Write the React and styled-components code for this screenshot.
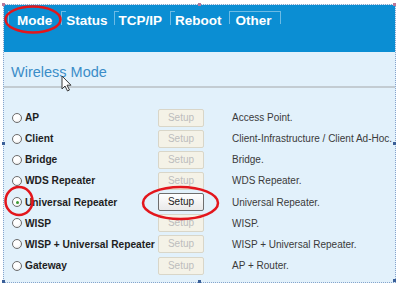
import React from 'react';
import styled, { createGlobalStyle } from 'styled-components';

const GlobalStyle = createGlobalStyle`
  html, body {
    margin: 0;
    padding: 0;
    background: #ffffff;
  }
  body {
    font-family: "Liberation Sans", Arial, sans-serif;
  }
`;

const Page = styled.div`
  position: relative;
  width: 400px;
  height: 287px;
  padding: 4px 0 0 3px;
  box-sizing: border-box;
  overflow: hidden;
`;

const Frame = styled.div`
  width: 393px;
  height: 279px;
  box-sizing: border-box;
  border: 1px dotted #86a4cc;
  display: flex;
  flex-direction: column;
  background: #e2f1fb;
`;

const Header = styled.div`
  height: 47px;
  flex: none;
  box-sizing: border-box;
  padding: 6px 0 0 4px;
  background: #0b8ed3;
  display: flex;
  align-items: flex-start;
`;

const Tab = styled.div`
  position: relative;
  height: ${({ $last }) => ($last ? 11 : 12)}px;
  padding: ${({ $last }) => ($last ? 1 : 2)}px ${({ $pr }) => $pr}px 0 ${({ $pl }) => $pl}px;
  border-left: 1px solid #6cbbe5;
  border-right: ${({ $last }) => ($last ? '1px solid #6cbbe5' : 'none')};
  border-top: ${({ $last }) => ($last ? '1px solid #6cbbe5' : 'none')};
  color: #ffffff;
  font: bold 13.5px "Liberation Sans", Arial, sans-serif;
  line-height: 16px;
  white-space: nowrap;

  &::before {
    content: '';
    display: ${({ $last }) => ($last ? 'none' : 'block')};
    position: absolute;
    top: 0;
    left: 0;
    width: 4px;
    height: 1px;
    background: #6cbbe5;
  }
`;

const Panel = styled.div`
  flex: 1;
  padding-top: 11px;
`;

const Title = styled.div`
  padding: 0 0 5px 7px;
  border-bottom: 2px solid #c3ccd2;
  color: #3b8dc8;
  font: 14.5px "Liberation Sans", Arial, sans-serif;
  line-height: 18px;
`;

const List = styled.div`
  padding: 19px 0 0 8px;
`;

const Row = styled.div`
  display: grid;
  grid-template-columns: 146px 74px 1fr;
  align-items: center;
  height: 21.15px;
`;

const Option = styled.label`
  display: flex;
  align-items: center;
  color: #1e1e1e;
  font: bold 10.2px "Liberation Sans", Arial, sans-serif;
  white-space: nowrap;
`;

const Radio = styled.span`
  position: relative;
  width: 10px;
  height: 10px;
  margin-right: 3px;
  box-sizing: border-box;
  border: 1px solid #6c6c6c;
  border-radius: 50%;
  background: radial-gradient(circle at 40% 35%, #ffffff 40%, #e4e4e4 100%);

  &::after {
    content: '';
    display: ${({ $checked }) => ($checked ? 'block' : 'none')};
    position: absolute;
    left: 2.5px;
    top: 2.5px;
    width: 3px;
    height: 3px;
    border-radius: 50%;
    background: #3a9a34;
  }
`;

const SetupButton = styled.button`
  width: 46px;
  height: 18px;
  padding: 0;
  box-sizing: border-box;
  border: 1px solid ${({ disabled }) => (disabled ? '#d9d6c8' : '#6e6e6e')};
  border-radius: 2px;
  background: ${({ disabled }) =>
    disabled ? '#f4f2e7' : 'linear-gradient(#ffffff, #e9e9e9)'};
  color: ${({ disabled }) => (disabled ? '#bdbdbd' : '#1c1c1c')};
  font: 10px "Liberation Sans", Arial, sans-serif;
  line-height: 16px;
`;

const Description = styled.span`
  color: #3a3a3a;
  font: 10px "Liberation Sans", Arial, sans-serif;
  white-space: nowrap;
`;

const Overlay = styled.svg`
  position: absolute;
  top: 0;
  left: 0;
  pointer-events: none;
`;

const tabs = [
  { label: 'Mode', pl: 8, pr: 9 },
  { label: 'Status', pl: 4, pr: 6 },
  { label: 'TCP/IP', pl: 4, pr: 8 },
  { label: 'Reboot', pl: 4, pr: 7 },
  { label: 'Other', pl: 6, pr: 8, last: true },
];

const modes = [
  { name: 'AP', desc: 'Access Point.' },
  { name: 'Client', desc: 'Client-Infrastructure / Client Ad-Hoc.' },
  { name: 'Bridge', desc: 'Bridge.' },
  { name: 'WDS Repeater', desc: 'WDS Repeater.' },
  { name: 'Universal Repeater', desc: 'Universal Repeater.', active: true },
  { name: 'WISP', desc: 'WISP.' },
  { name: 'WISP + Universal Repeater', desc: 'WISP + Universal Repeater.' },
  { name: 'Gateway', desc: 'AP + Router.' },
];

const handles = [
  [2, 3], [198, 3], [393, 3],
  [2, 142], [393, 142],
  [2, 280], [198, 280], [393, 279],
];

const Annotations = () => (
  <Overlay width="400" height="287" viewBox="0 0 400 287">
    {handles.map(([x, y], i) => (
      <rect key={i} x={x} y={y} width="3" height="3" fill={y < 10 ? '#b8789a' : '#3a5f98'} />
    ))}
    <g fill="none" stroke="#e3161c" strokeWidth="2.5">
      <ellipse cx="33" cy="19.5" rx="27.5" ry="13" />
      <ellipse cx="19" cy="201" rx="13.5" ry="14" />
      <ellipse cx="180.5" cy="203" rx="37.5" ry="16" />
    </g>
    <path
      d="M62 76 L62 89 L65 86 L67.5 91 L69.5 90 L67 85.2 L71 85.2 Z"
      fill="#ffffff"
      stroke="#3a3a3a"
      strokeWidth="1"
      strokeLinejoin="round"
    />
  </Overlay>
);

const App = () => (
  <Page>
    <GlobalStyle />
    <Frame>
      <Header>
        {tabs.map((t) => (
          <Tab key={t.label} $pl={t.pl} $pr={t.pr} $last={t.last}>
            {t.label}
          </Tab>
        ))}
      </Header>
      <Panel>
        <Title>Wireless Mode</Title>
        <List>
          {modes.map((m) => (
            <Row key={m.name}>
              <Option>
                <Radio $checked={m.active} />
                {m.name}
              </Option>
              <SetupButton disabled={!m.active}>Setup</SetupButton>
              <Description>{m.desc}</Description>
            </Row>
          ))}
        </List>
      </Panel>
    </Frame>
    <Annotations />
  </Page>
);

export default App;
